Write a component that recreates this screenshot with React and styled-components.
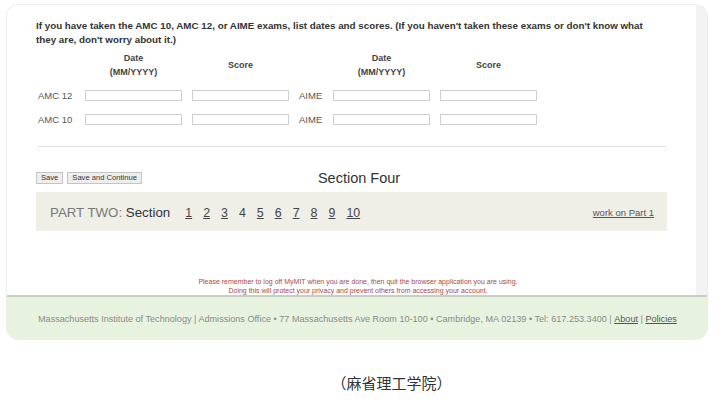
import React from "react";
import styled, { createGlobalStyle } from "styled-components";

const Global = createGlobalStyle`
  html, body { margin: 0; padding: 0; background: #fff; }
  body { font-family: "Liberation Sans", Arial, sans-serif; }
`;

const Page = styled.div`
  width: 715px;
  height: 405px;
  padding-top: 4px;
  box-sizing: border-box;
`;

const Card = styled.div`
  margin-left: 6px;
  width: 702px;
  height: 336px;
  box-sizing: border-box;
  border: 1px solid #ececec;
  border-radius: 12px;
  overflow: hidden;
  display: flex;
  flex-direction: column;
`;

const Upper = styled.div`
  flex: 1;
  display: flex;
  min-height: 0;
`;

const Main = styled.div`
  flex: 1;
  padding: 14px 28px 0 29px;
  display: flex;
  flex-direction: column;
`;

const Strip = styled.div`
  width: 13px;
  background: #f3f3f5;
`;

const Intro = styled.p`
  margin: 0;
  font-size: 9.8px;
  line-height: 14px;
  font-weight: bold;
  color: #333;
  width: 618px;
`;

const ScoreGrid = styled.div`
  margin: 4px 0 0 2px;
  display: grid;
  grid-template-columns: 37px 97px 97px 24px 97px 97px;
  column-gap: 10px;
  row-gap: 13px;
  align-items: center;
`;

const ColHead = styled.div`
  grid-column: ${(p) => p.$col};
  font-size: 9px;
  font-weight: bold;
  color: #444;
  text-align: center;
  line-height: 14px;
  align-self: center;
  margin-bottom: -2px;
`;

const RowLabel = styled.div`
  font-size: 9.5px;
  color: #555;
  white-space: nowrap;
`;

const Field = styled.div`
  height: 11px;
  border: 1px solid #cfcfcf;
  box-sizing: border-box;
  background: #fff;
`;

const Rule = styled.hr`
  margin: 21px 0 0 1px;
  width: 630px;
  border: none;
  border-top: 1.5px solid #e2e2e2;
`;

const ActionRow = styled.div`
  margin-top: 23px;
  width: 632px;
  display: grid;
  grid-template-columns: 1fr auto 1fr;
  align-items: center;
`;

const Buttons = styled.div`
  display: flex;
  gap: 4px;
`;

const SmallBtn = styled.button`
  font-family: "Liberation Sans", Arial, sans-serif;
  font-size: 7.6px;
  color: #333;
  background: #eeeeee;
  border: 1px solid #c4c4c4;
  height: 12px;
  padding: 0 4px;
  line-height: 10px;
`;

const SectionTitle = styled.div`
  font-size: 14.5px;
  color: #333;
  padding-left: 14px;
`;

const NavBar = styled.div`
  margin-top: 6px;
  width: 631px;
  height: 39px;
  box-sizing: border-box;
  background: #efefe8;
  display: flex;
  align-items: center;
  padding: 2px 13px 0 14px;
`;

const PartLabel = styled.span`
  font-size: 13.3px;
  color: #777;
  margin-right: 15px;
  b { font-weight: normal; color: #333; }
`;

const Nums = styled.div`
  display: flex;
  gap: 11px;
  font-size: 12.4px;
  flex: 1;
`;

const Num = styled.span`
  color: #444;
  text-decoration: ${(p) => (p.$current ? "none" : "underline")};
`;

const PartLink = styled.a`
  font-size: 9.5px;
  color: #555;
  text-decoration: underline;
`;

const Notice = styled.div`
  margin-top: auto;
  margin-bottom: 0;
  text-align: center;
  font-size: 7px;
  line-height: 9px;
  color: #a84848;
  padding-left: 12px;
`;

const Footer = styled.div`
  height: 44px;
  border-top: 2px solid #c9cfc4;
  background: #e8f3df;
  display: flex;
  align-items: center;
  padding: 2px 0 0 31px;
  box-sizing: border-box;
  font-size: 9.1px;
  color: #8a8a8a;
  white-space: nowrap;
`;

const FootLink = styled.a`
  color: #555;
  text-decoration: underline;
`;

const Caption = styled.div`
  margin-top: 32px;
  padding-left: 68px;
  text-align: center;
  font-family: "Noto Sans CJK SC", "Noto Sans", sans-serif;
  font-size: 15px;
  color: #333;
`;

const rows = [
  ["AMC 12", "AIME"],
  ["AMC 10", "AIME"],
];

export default function App() {
  return (
    <Page>
      <Global />
      <Card>
        <Upper>
          <Main>
            <Intro>
              If you have taken the AMC 10, AMC 12, or AIME exams, list dates and scores. (If you haven't taken these exams or don't know what they are, don't worry about it.)
            </Intro>
            <ScoreGrid>
              <ColHead $col={2}>Date<br />(MM/YYYY)</ColHead>
              <ColHead $col={3}>Score</ColHead>
              <ColHead $col={5}>Date<br />(MM/YYYY)</ColHead>
              <ColHead $col={6}>Score</ColHead>
              {rows.map(([a, b]) => (
                <React.Fragment key={a}>
                  <RowLabel>{a}</RowLabel>
                  <Field />
                  <Field />
                  <RowLabel>{b}</RowLabel>
                  <Field />
                  <Field />
                </React.Fragment>
              ))}
            </ScoreGrid>
            <Rule />
            <ActionRow>
              <Buttons>
                <SmallBtn>Save</SmallBtn>
                <SmallBtn>Save and Continue</SmallBtn>
              </Buttons>
              <SectionTitle>Section Four</SectionTitle>
              <span />
            </ActionRow>
            <NavBar>
              <PartLabel>PART TWO: <b>Section</b></PartLabel>
              <Nums>
                {[1, 2, 3, 4, 5, 6, 7, 8, 9, 10].map((n) => (
                  <Num key={n} $current={n === 4}>{n}</Num>
                ))}
              </Nums>
              <PartLink>work on Part 1</PartLink>
            </NavBar>
            <Notice>
              Please remember to log off MyMIT when you are done, then quit the browser application you are using.<br />
              Doing this will protect your privacy and prevent others from accessing your account.
            </Notice>
          </Main>
          <Strip />
        </Upper>
        <Footer>
          Massachusetts Institute of Technology | Admissions Office • 77 Massachusetts Ave Room 10-100 • Cambridge, MA 02139 • Tel: 617.253.3400 |&nbsp;<FootLink>About</FootLink>&nbsp;|&nbsp;<FootLink>Policies</FootLink>
        </Footer>
      </Card>
      <Caption>（麻省理工学院）</Caption>
    </Page>
  );
}
